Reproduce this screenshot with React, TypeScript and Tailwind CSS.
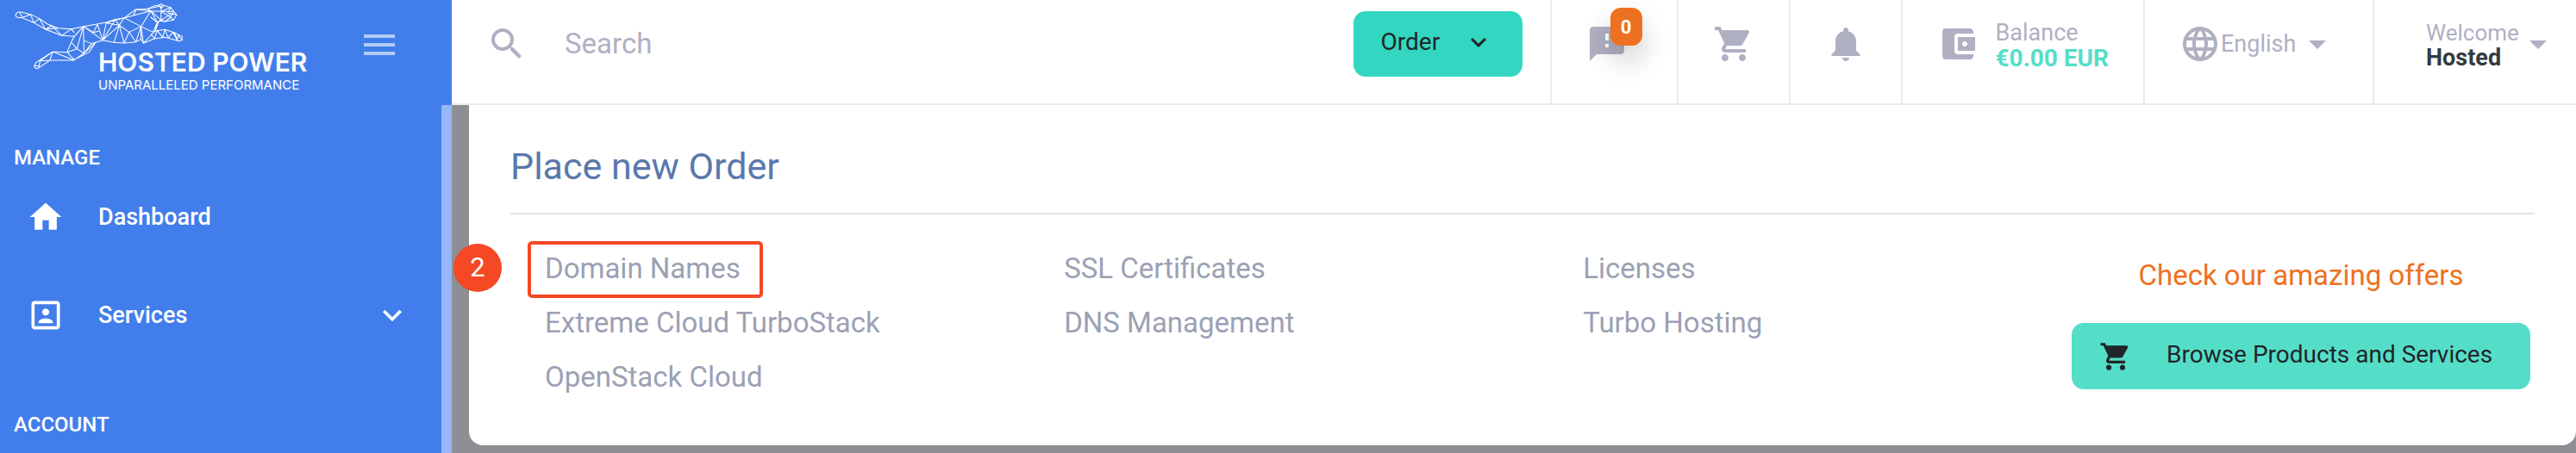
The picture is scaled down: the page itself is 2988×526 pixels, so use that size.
import type { ReactNode } from "react";
import {
  MdAccountBalanceWallet,
  MdArrowDropDown,
  MdFeedback,
  MdHome,
  MdKeyboardArrowDown,
  MdLanguage,
  MdMenu,
  MdPortrait,
  MdSearch,
  MdShoppingCart,
} from "react-icons/md";

const columns = [
  ["Domain Names", "Extreme Cloud TurboStack", "OpenStack Cloud"],
  ["SSL Certificates", "DNS Management"],
  ["Licenses", "Turbo Hosting"],
];

function CatMark() {
  return (
    <svg viewBox="0 0 216 84" className="absolute left-0 top-0 h-[84px] w-[216px]" fill="none" stroke="#fff" aria-hidden="true">
      <g transform="scale(.3444 .3333)" strokeWidth="3" strokeLinejoin="round" strokeLinecap="round">
        <path d="M281 92 240 101 196 98 160 84 133 65 103 50 72 42H60L52 52 56 60 74 62 114 79 153 102 208 124 250 127" />
        <path d="M66 43 76 61 103 50 114 79 133 65 153 102 175 90 208 124 240 101 250 113M196 98 153 102" />
        <path d="M281 92 358 78 388 68 418 62 458 33 498 31 520 20 535 18 543 13 551 19 575 26 585 40 595 52 584 70 556 75 535 73 523 108" />
        <path d="M346 140 384 148 418 150 458 146 475 137 483 150 520 135 557 130 603 143 613 140 614 127 588 114 555 103 523 108 483 150" />
        <path d="M508 118 520 135 530 107 548 130 555 103 567 132 582 112 597 140 600 122 612 138M597 140 588 114" />
        <path d="M281 92 250 127 240 147 226 182 259 170 281 92 283 186 250 208 226 182M240 147 259 170 283 186M281 92 346 140 322 148 300 182 250 208" />
        <path d="M288 143 308 152 322 148M308 152 283 186 322 148M283 143 288 143" />
        <path d="M226 182 178 180 121 218 115 232 122 239 131 236 168 210H250L178 180 168 210M178 180 135 212 131 236M135 212 168 210M116 228 131 230" />
        <path d="M281 92 315 113 332 109M315 113 328 85 346 140 358 78M346 140 402 88 358 80 388 68 346 140M388 68 402 88 418 62M384 148 402 88 418 150 435 112 402 88M435 112 458 146 475 92 435 112" />
        <path d="M358 78 418 62 475 92 475 137M475 92 483 150M475 92 515 112 530 78 508 60M418 62 508 38 475 92M458 33 450 54M458 33 508 38 498 31 543 20 542 70 530 78 508 38 542 70 575 50M508 38 543 40 575 26 565 45 595 52M543 40 575 60 585 40 543 40M575 60 556 75 542 70M575 60 584 70M535 18 543 30 551 19M515 112 523 108 530 78" />
      </g>
    </svg>
  );
}

function BellIcon() {
  return (
    <svg viewBox="0 0 48 48" className="size-12" fill="currentColor" aria-hidden="true">
      <path d="M24 5c1.700 0 3 1.300 3 3v1.200c5.300 1.400 9 5.800 9 11.300v11.300l4.500 4.200v2H7.500v-2l4.500-4.200V20.500c0-5.500 3.700-9.900 9-11.300V8c0-1.700 1.300-3 3-3Z" />
      <path d="M19.800 40h8.400c-.3 2.300-2 4-4.200 4s-3.900-1.700-4.200-4Z" />
    </svg>
  );
}

function Cell({ children }: { children: ReactNode }) {
  return <div className="flex items-center border-l-2 border-[#ebebf0] px-10 pb-[18px]">{children}</div>;
}

function Header() {
  return (
    <header className="flex h-[122px] items-stretch border-b-2 border-[#ebebf0] bg-white text-[#b0b0c3]">
      <label className="flex min-w-0 flex-1 items-center gap-[43px] pb-[18px] pl-10">
        <MdSearch className="size-12 shrink-0" aria-hidden="true" />
        <input
          type="search"
          placeholder="Search"
          aria-label="Search"
          className="min-w-0 flex-1 bg-transparent text-[33px] outline-none placeholder:text-[#b0b0c3]"
        />
      </label>
      <div className="flex items-center pb-[18px] pr-8">
        <button type="button" className="flex h-[76px] w-[196px] items-center justify-between rounded-[14px] bg-[#33d6c0] pb-1 pl-8 pr-[33px] text-[28px] text-[#212529]">
          Order
          <MdKeyboardArrowDown className="size-9" aria-hidden="true" />
        </button>
      </div>
      <Cell>
        <button type="button" aria-label="Notifications 0" className="relative mr-[17px]">
          <MdFeedback className="size-12" />
          <span className="absolute -top-[18px] left-7 flex h-11 w-[37px] items-center justify-center rounded-xl bg-[#ed7120] text-[22px] font-bold text-white shadow-[0_16px_32px_rgba(0,0,0,0.2)]">
            0
          </span>
        </button>
      </Cell>
      <Cell>
        <button type="button" aria-label="Cart">
          <MdShoppingCart className="size-12" />
        </button>
      </Cell>
      <Cell>
        <button type="button" aria-label="Alerts">
          <BellIcon />
        </button>
      </Cell>
      <Cell>
        <MdAccountBalanceWallet className="mr-5 size-12" aria-hidden="true" />
        <div className="pt-1 text-[27px] leading-[29px]">
          <div>Balance</div>
          <div className="text-[28px] font-bold text-[#54dec8]">€0.00 EUR</div>
        </div>
      </Cell>
      <Cell>
        <label className="flex items-center">
          <MdLanguage className="size-12" aria-hidden="true" />
          <select aria-label="Language" className="appearance-none bg-transparent text-[27px] outline-none">
            <option>English</option>
          </select>
          <MdArrowDropDown className="size-12" aria-hidden="true" />
        </label>
      </Cell>
      <div className="flex items-center border-l-2 border-[#ebebf0] pb-[18px] pl-[60px] pr-5">
        <button type="button" className="flex items-center text-left">
          <span className="block w-[106px] pt-1 text-[26px] leading-[29px]">
            <span className="block">Welcome</span>
            <span className="block text-[27px] font-bold text-[#343a40]">Hosted</span>
          </span>
          <MdArrowDropDown className="size-12" aria-hidden="true" />
        </button>
      </div>
    </header>
  );
}

function Sidebar() {
  return (
    <aside className="flex w-[524px] shrink-0 flex-col bg-[#427eeb] text-white">
      <div className="relative flex h-[122px] shrink-0 items-start justify-between pl-[114px] pr-[60px]">
        <CatMark />
        <div className="relative pt-[54px] font-[Inter,sans-serif]">
          <div className="text-[30px] leading-9 font-semibold">HOSTED POWER</div>
          <div className="text-[15px] leading-[18px]">UNPARALLELED PERFORMANCE</div>
        </div>
        <button type="button" aria-label="Toggle menu" className="pt-7 text-white/60">
          <MdMenu className="size-12" />
        </button>
      </div>
      <nav className="flex-1 border-r-[12px] border-[#96b6f6]">
        <h2 className="pl-4 pt-[45px] text-[24px] leading-8 font-medium">MANAGE</h2>
        <a href="#dashboard" className="mt-[23px] flex h-[60px] items-center pl-[31px] text-[27px] font-medium">
          <MdHome className="mr-[39px] size-11" aria-hidden="true" />
          Dashboard
        </a>
        <a href="#services" className="mt-[54px] flex h-[60px] items-center pl-[31px] pr-[35px] text-[27px] font-medium">
          <MdPortrait className="mr-[39px] size-11" aria-hidden="true" />
          Services
          <MdKeyboardArrowDown className="ml-auto size-11" aria-hidden="true" />
        </a>
        <h2 className="pl-4 pt-[81px] text-[24px] leading-8 font-medium">ACCOUNT</h2>
      </nav>
    </aside>
  );
}

function OrderPanel() {
  return (
    <section className="relative rounded-b-2xl bg-white px-12 pb-12">
      <h1 className="border-b-2 border-[#e4e4e6] pb-[27px] pt-11 text-[43px] leading-[54px] text-[#5a78ac]">Place new Order</h1>
      <div className="flex pl-10 pt-[31px]">
        <div className="flex flex-1">
          {columns.map((links) => (
            <ul key={links[0]} className="w-[34%] last:w-[32%]">
              {links.map((name) => (
                <li key={name} className="flex h-[63px] items-center text-[33px] leading-[48px] text-[#9ba1b4]">
                  <a href="#order" className="relative">
                    {name}
                    {name === "Domain Names" && (
                      <span className="absolute -bottom-[10px] -left-[20px] -right-[26px] -top-2 rounded-[5px] border-4 border-[#f54824]" />
                    )}
                  </a>
                </li>
              ))}
            </ul>
          ))}
        </div>
        <div className="flex flex-col items-center pr-[5px] pt-[15px]">
          <p className="text-[33px] leading-[50px] text-[#ed7120]">Check our amazing offers</p>
          <button type="button" className="mt-[30px] flex h-[77px] w-[532px] items-center rounded-[14px] bg-[#54dec8] pl-8 text-[28px] text-[#212529]">
            <MdShoppingCart className="mr-10 size-[38px]" aria-hidden="true" />
            <span className="pb-1">Browse Products and Services</span>
          </button>
        </div>
      </div>
      <span className="absolute -left-[18px] top-[161px] flex size-14 items-center justify-center rounded-full bg-[#f54824] text-[31px] text-white">2</span>
    </section>
  );
}

export default function App() {
  return (
    <div className="flex min-h-screen font-[Roboto,sans-serif]">
      <Sidebar />
      <main className="flex min-w-0 flex-1 flex-col bg-[#8e8f94]">
        <Header />
        <div className="pl-5">
          <OrderPanel />
        </div>
      </main>
    </div>
  );
}
